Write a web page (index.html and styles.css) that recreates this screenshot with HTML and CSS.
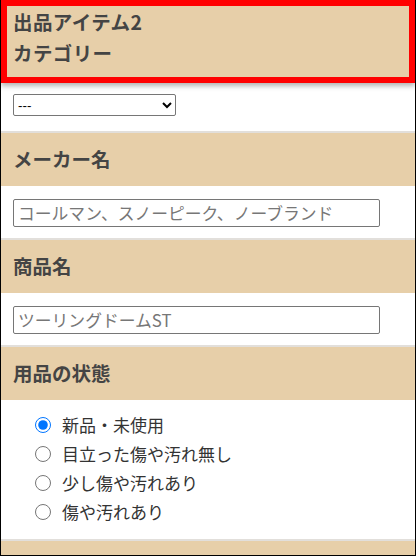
FILE: index.html
```html
<!DOCTYPE html>
<html lang="ja">
<head>
    <title>出品アイテム</title>
    <meta charset="UTF-8">
    <meta name="viewport" content="width=device-width, initial-scale=1.0">
    <link rel="stylesheet" href="styles.css">
</head>
<body>
    <div class="marco">
        <div class="titulo">
            <div>出品アイテム2</div>
            <div>カテゴリー</div>
        </div>
        <div class="campo campo-select">
            <select name="categoria">
                <option>---</option>
            </select>
        </div>

        <div class="seccion">メーカー名</div>
        <div class="campo">
            <input type="text" name="maker" placeholder="コールマン、スノーピーク、ノーブランド">
        </div>

        <div class="seccion">商品名</div>
        <div class="campo">
            <input type="text" name="nombre" placeholder="ツーリングドームST">
        </div>

        <div class="seccion">用品の状態</div>
        <div class="campo campo-radios">
            <label><input type="radio" name="estado" checked>新品・未使用</label>
            <label><input type="radio" name="estado">目立った傷や汚れ無し</label>
            <label><input type="radio" name="estado">少し傷や汚れあり</label>
            <label><input type="radio" name="estado">傷や汚れあり</label>
        </div>

        <div class="seccion"></div>
    </div>
</body>
</html>
```

FILE: styles.css
```css
body {
    font-family: "Noto Sans CJK JP", "Liberation Sans", sans-serif;
    margin: 0;
    padding: 0;
    background-color: #fff;
}

.marco {
    height: 556px;
    box-sizing: border-box;
    border: 1px solid #000;
    border-top: none;
    overflow: hidden;
}

.titulo {
    position: relative;
    background-color: #e7cfa9;
    border: 6px solid #f00;
    padding: 0 6px 9px;
    font-size: 19.5px;
    font-weight: bold;
    line-height: 31px;
    letter-spacing: 0.4px;
    color: #444;
    box-shadow: 0 3px 5px rgba(0,0,0,0.3);
}

.seccion {
    background-color: #e7cfa9;
    padding: 12px 12px 14px;
    font-size: 19.5px;
    font-weight: bold;
    line-height: 27px;
    min-height: 27px;
    color: #444;
}

.campo {
    padding: 13px 12px 11px;
    border-bottom: 2px solid #e2dfdb;
}

.campo-select {
    padding: 11px 12px 15px;
}

select {
    display: block;
    width: 163px;
    height: 22px;
    font-size: 13.33px;
    border: 1px solid #767676;
    border-radius: 2px;
    background-color: #fff;
    color: #000;
}

input[type=text] {
    display: block;
    width: 367px;
    height: 28px;
    box-sizing: border-box;
    padding: 0 4px;
    border: 1px solid #767676;
    border-radius: 2px;
    font-family: "Noto Sans CJK JP", sans-serif;
    font-size: 16.8px;
}

input[type=text]::placeholder {
    color: #777;
}

.campo-radios {
    padding: 10px 12px 13px 34px;
    display: flex;
    flex-direction: column;
}

.campo-radios label {
    display: flex;
    align-items: center;
    gap: 11px;
    height: 29px;
    font-size: 17px;
    color: #333;
}

input[type=radio] {
    width: 16px;
    height: 16px;
    margin: 0;
}
```
